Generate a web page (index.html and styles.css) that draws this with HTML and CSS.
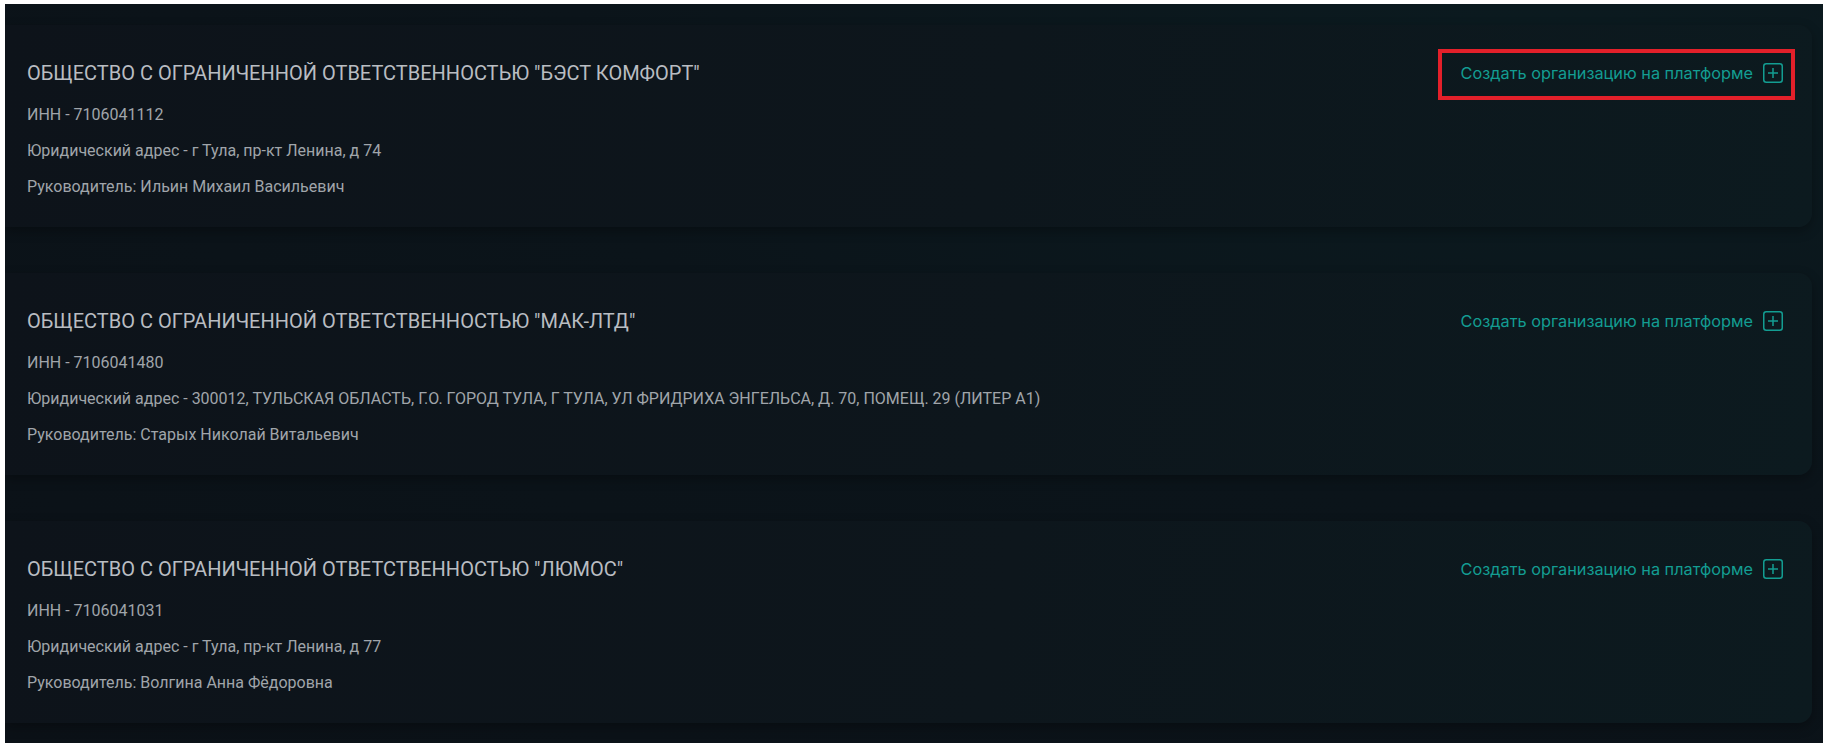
FILE: index.html
```html
<!DOCTYPE html>
<html lang="ru">
<head>
<meta charset="utf-8">
<title>Организации</title>
<link rel="stylesheet" href="styles.css">
</head>
<body>
<main class="page">
  <section class="card">
    <div class="info">
      <h2 class="title">ОБЩЕСТВО С ОГРАНИЧЕННОЙ ОТВЕТСТВЕННОСТЬЮ "БЭСТ КОМФОРТ"</h2>
      <p class="line">ИНН - 7106041112</p>
      <p class="line">Юридический адрес - г Тула, пр-кт Ленина, д 74</p>
      <p class="line">Руководитель: Ильин Михаил Васильевич</p>
    </div>
    <button class="create">
      <span class="create-text">Создать организацию на платформе</span>
      <svg class="plus" width="20" height="20" viewBox="0 0 20 20"><rect x="0.75" y="0.75" width="18.5" height="18.5" rx="2.5" fill="none" stroke="currentColor" stroke-width="1.5"/><path d="M10 5v10M5 10h10" stroke="currentColor" stroke-width="1.5" fill="none"/></svg>
      <span class="highlight"></span>
    </button>
  </section>
  <section class="card">
    <div class="info">
      <h2 class="title">ОБЩЕСТВО С ОГРАНИЧЕННОЙ ОТВЕТСТВЕННОСТЬЮ "МАК-ЛТД"</h2>
      <p class="line">ИНН - 7106041480</p>
      <p class="line">Юридический адрес - 300012, ТУЛЬСКАЯ ОБЛАСТЬ, Г.О. ГОРОД ТУЛА, Г ТУЛА, УЛ ФРИДРИХА ЭНГЕЛЬСА, Д. 70, ПОМЕЩ. 29 (ЛИТЕР А1)</p>
      <p class="line">Руководитель: Старых Николай Витальевич</p>
    </div>
    <button class="create">
      <span class="create-text">Создать организацию на платформе</span>
      <svg class="plus" width="20" height="20" viewBox="0 0 20 20"><rect x="0.75" y="0.75" width="18.5" height="18.5" rx="2.5" fill="none" stroke="currentColor" stroke-width="1.5"/><path d="M10 5v10M5 10h10" stroke="currentColor" stroke-width="1.5" fill="none"/></svg>
    </button>
  </section>
  <section class="card">
    <div class="info">
      <h2 class="title">ОБЩЕСТВО С ОГРАНИЧЕННОЙ ОТВЕТСТВЕННОСТЬЮ "ЛЮМОС"</h2>
      <p class="line">ИНН - 7106041031</p>
      <p class="line">Юридический адрес - г Тула, пр-кт Ленина, д 77</p>
      <p class="line">Руководитель: Волгина Анна Фёдоровна</p>
    </div>
    <button class="create">
      <span class="create-text">Создать организацию на платформе</span>
      <svg class="plus" width="20" height="20" viewBox="0 0 20 20"><rect x="0.75" y="0.75" width="18.5" height="18.5" rx="2.5" fill="none" stroke="currentColor" stroke-width="1.5"/><path d="M10 5v10M5 10h10" stroke="currentColor" stroke-width="1.5" fill="none"/></svg>
    </button>
  </section>
</main>
</body>
</html>
```

FILE: styles.css
```css
html, body {
  margin: 0;
  padding: 0;
  background: #ffffff;
}
body {
  padding: 4px 5px 5px 5px;
  height: 748px;
  box-sizing: border-box;
}
.page {
  height: 739px;
  box-sizing: border-box;
  background: radial-gradient(ellipse at 85% 10%, #0b1b20 0%, #0b141a 45%, #0b1117 100%);
  padding: 21px 11px 0 0;
  display: flex;
  flex-direction: column;
  gap: 46px;
  overflow: hidden;
}
.card {
  display: flex;
  justify-content: space-between;
  align-items: flex-start;
  background: linear-gradient(100deg, #0d131a 0%, #0d161c 55%, #0c1a1f 100%);
  border-radius: 0 14px 14px 0;
  box-shadow: 0 4px 12px rgba(0, 0, 0, 0.3);
  padding: 36px 29px 30px 22px;
}
.info {
  display: flex;
  flex-direction: column;
}
.title {
  margin: 0 0 20px;
  font-family: Roboto, "Liberation Sans", sans-serif;
  font-weight: 400;
  font-size: 20px;
  line-height: 24px;
  color: #b9bdc2;
  letter-spacing: 0;
}
.line {
  margin: 0 0 16px;
  font-family: Roboto, "Liberation Sans", sans-serif;
  font-size: 16px;
  line-height: 20px;
  color: #a0a5aa;
}
.line:last-child {
  margin-bottom: 0;
}
.create {
  position: relative;
  display: flex;
  align-items: center;
  gap: 10px;
  background: none;
  border: 0;
  padding: 0;
  height: 24px;
  color: #139d92;
  font-family: Inter, "Noto Sans", sans-serif;
  font-size: 16.3px;
  cursor: pointer;
}
.create-text {
  line-height: 24px;
}
.plus {
  display: block;
}
.highlight {
  position: absolute;
  left: -23px;
  right: -12px;
  top: -12px;
  bottom: -15px;
  border: 4px solid #e3202a;
  pointer-events: none;
}
```
